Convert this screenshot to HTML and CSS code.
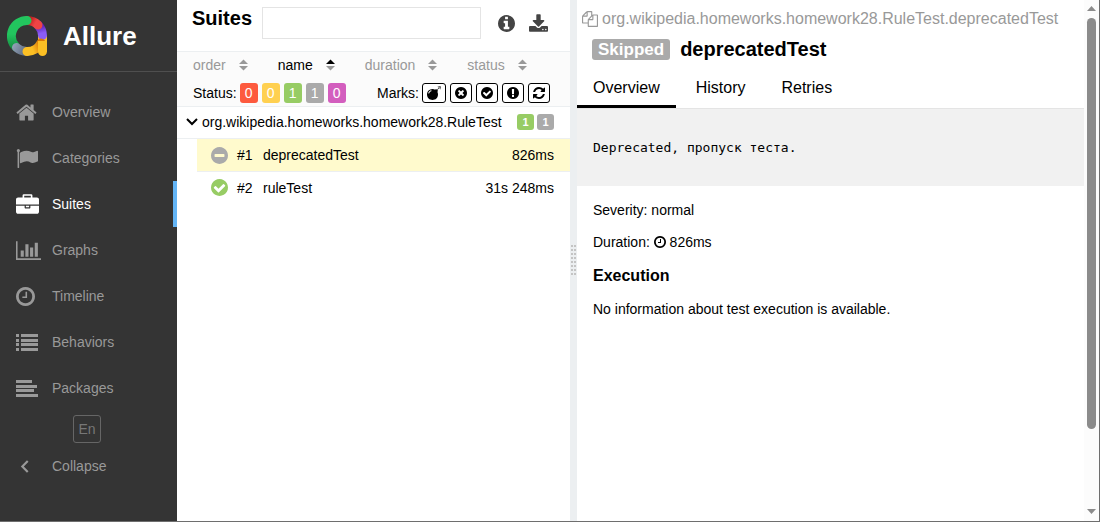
FILE: index.html
```html
<!DOCTYPE html>
<html lang="en">
<head>
<meta charset="utf-8">
<title>Allure Report</title>
<link rel="stylesheet" href="styles.css">
</head>
<body>
<svg class="defs" aria-hidden="true">
  <symbol id="sorter" viewBox="0 0 10 12"><path class="up" d="M5 0L10 5H0z"/><path class="down" d="M0 7H10L5 12z"/></symbol>
  <symbol id="clock" viewBox="128 128 1536 1536"><path d="M1024 544v448q0 14-9 23t-23 9h-320q-14 0-23-9t-9-23v-64q0-14 9-23t23-9h224v-352q0-14 9-23t23-9h64q14 0 23 9t9 23zm416 352q0-148-73-273t-198-198-273-73-273 73-198 198-73 273 73 273 198 198 273 73 273-73 198-198 73-273zm224 0q0 209-103 385.5t-279.5 279.5-385.5 103-385.5-103-279.5-279.5-103-385.5 103-385.5 279.5-279.5 385.5-103 385.5 103 279.5 279.5 103 385.5z"/></symbol>
  <symbol id="check" viewBox="128 128 1536 1536"><path d="M1412 734q0-28-18-46l-91-90q-19-19-45-19t-45 19l-408 407-226-226q-19-19-45-19t-45 19l-91 90q-18 18-18 46 0 27 18 45l362 362q19 19 45 19 27 0 46-19l543-543q18-18 18-45zm252 162q0 209-103 385.5t-279.5 279.5-385.5 103-385.5-103-279.5-279.5-103-385.5 103-385.5 279.5-279.5 385.5-103 385.5 103 279.5 279.5 103 385.5z"/></symbol>
</svg>
<div class="app">
  <nav class="side">
    <a class="brand" href="#">
      <svg class="logo" viewBox="0 0 40 40" fill="none" stroke-width="9" stroke-linecap="round">
        <defs>
          <linearGradient id="lg" gradientUnits="userSpaceOnUse" x1="0" y1="18" x2="0" y2="36"><stop offset="0" stop-color="#22c55e"/><stop offset="1" stop-color="#15803d"/></linearGradient>
          <linearGradient id="ls" gradientUnits="userSpaceOnUse" x1="5" y1="30" x2="20" y2="38"><stop offset="0" stop-color="#94a3b8"/><stop offset="1" stop-color="#58657a"/></linearGradient>
          <linearGradient id="ly" gradientUnits="userSpaceOnUse" x1="20" y1="36" x2="34" y2="30"><stop offset=".4" stop-color="#fbbf24"/><stop offset="1" stop-color="#d97706"/></linearGradient>
          <linearGradient id="lp" gradientUnits="userSpaceOnUse" x1="33" y1="10" x2="36" y2="22"><stop offset="0" stop-color="#5b21b6"/><stop offset=".6" stop-color="#8b5cf6"/></linearGradient>
          <linearGradient id="lr" gradientUnits="userSpaceOnUse" x1="22" y1="4" x2="32" y2="10"><stop offset="0" stop-color="#b91c1c"/><stop offset=".6" stop-color="#ef4444"/></linearGradient>
        </defs>
        <path stroke="#fbbf24" stroke-linecap="butt" d="M35.500 20V30"/>
        <path stroke="url(#lp)" d="M31 9A15.500 15.500 0 0 1 35.500 19.500"/>
        <path stroke="url(#lr)" d="M20 4.500A15.500 15.500 0 0 1 31 9"/>
        <path stroke="url(#lg)" d="M9 31A15.500 15.500 0 0 1 20 4.500"/>
        <path stroke="url(#ls)" d="M9.500 31.500A15.500 15.500 0 0 0 20 35.500"/>
        <path stroke="url(#ly)" d="M20 35.500A15.500 15.500 0 0 0 34 27"/>
        <path fill="#fbbf24" d="M31 25H40V35.500A4.500 4.500 0 0 1 31 35.500z"/>
      </svg>
      <span class="brand-name">Allure</span>
    </a>
    <ul class="menu">
      <li><a href="#"><svg class="w20" viewBox="64 128 1664 1536"><path d="M1472 992v480q0 26-19 45t-45 19h-384v-384h-256v384h-384q-26 0-45-19t-19-45v-480q0-1 .5-3t.5-3l575-474 575 474q1 2 1 6zm223-69l-62 74q-8 9-21 11h-3q-13 0-21-7l-692-577-692 577q-12 8-24 7-13-2-21-11l-62-74q-8-10-7-23.500t11-21.500l719-599q32-26 76-26t76 26l244 204v-195q0-14 9-23t23-9h192q14 0 23 9t9 23v408l219 182q10 8 11 21.500t-7 23.500z"/></svg><span>Overview</span></a></li>
      <li><a href="#"><svg class="w22" viewBox="0 128 1792 1536"><path d="M320 256q0 72-64 110v1266q0 13-9.500 22.500t-22.500 9.500h-64q-13 0-22.500-9.500t-9.500-22.500v-1266q-64-38-64-110 0-53 37.500-90.500t90.500-37.500 90.500 37.500 37.500 90.500zm1472 64v763q0 25-12.500 38.500t-39.500 27.500q-215 116-369 116-61 0-123.500-22t-108.500-48-115.500-48-142.500-22q-192 0-464 146-17 9-33 9-26 0-45-19t-19-45v-742q0-32 31-55 21-14 79-43 236-120 421-120 107 0 200 29t219 88q38 19 88 19 54 0 117.500-21t110-47 88-47 54.500-21q26 0 45 19t19 45z"/></svg><span>Categories</span></a></li>
      <li><a class="current" href="#"><svg class="w23" viewBox="0 0 1792 1536"><path d="M640 256h512v-128h-512v128zm1152 640v480q0 66-47 113t-113 47h-1472q-66 0-113-47t-47-113v-480h672v160q0 26 19 45t45 19h320q26 0 45-19t19-45v-160h672zm-768 0v128h-256v-128h256zm768-480v384h-1792v-384q0-66 47-113t113-47h352v-160q0-40 28-68t68-28h576q40 0 68 28t28 68v160h352q66 0 113 47t47 113z"/></svg><span>Suites</span></a></li>
      <li><a href="#"><svg class="w25" viewBox="0 128 2048 1536"><path d="M640 896v512h-256v-512h256zm384-512v1024h-256v-1024h256zm1024 1152v128h-2048v-1536h128v1408h1920zm-640-896v768h-256v-768h256zm384-384v1152h-256v-1152h256z"/></svg><span>Graphs</span></a></li>
      <li><a href="#"><svg class="w19"><use href="#clock"/></svg><span>Timeline</span></a></li>
      <li><a href="#"><svg class="w22" viewBox="0 0 22 17"><path d="M0 0h3v3H0zM5 0h17v3H5zM0 5h3v3H0zM5 5h17v3H5zM0 9h3v3H0zM5 9h17v3H5zM0 14h3v3H0zM5 14h17v3H5z"/></svg><span>Behaviors</span></a></li>
      <li><a href="#"><svg class="w22" viewBox="0 0 22 17"><path d="M0 0h16v3H0zM0 5h21v3H0zM0 9h18v3H0zM0 14h22v3H0z"/></svg><span>Packages</span></a></li>
    </ul>
    <button class="lang" type="button">En</button>
    <button class="collapse" type="button"><svg viewBox="0 0 8 12"><path d="M7 1L2 6l5 5" fill="none" stroke="currentColor" stroke-width="2"/></svg><span>Collapse</span></button>
  </nav>

  <main class="suites">
    <header class="suites-head">
      <h1>Suites</h1>
      <input type="text" aria-label="Search">
      <button class="tool" type="button" aria-label="Info"><svg class="info" viewBox="128 128 1536 1536"><path d="M1152 1376v-160q0-14-9-23t-23-9h-96v-512q0-14-9-23t-23-9h-320q-14 0-23 9t-9 23v160q0 14 9 23t23 9h96v320h-96q-14 0-23 9t-9 23v160q0 14 9 23t23 9h448q14 0 23-9t9-23zm-128-896v-160q0-14-9-23t-23-9h-192q-14 0-23 9t-9 23v160q0 14 9 23t23 9h192q14 0 23-9t9-23zm640 416q0 209-103 385.500t-279.500 279.500-385.500 103-385.500-103-279.500-279.500-103-385.500 103-385.500 279.500-279.500 385.500-103 385.500 103 279.500 279.500 103 385.500z"/></svg></button>
      <button class="tool" type="button" aria-label="Download"><svg class="download" viewBox="64 0 1664 1536"><path d="M1344 1344q0-26-19-45t-45-19-45 19-19 45 19 45 45 19 45-19 19-45zm256 0q0-26-19-45t-45-19-45 19-19 45 19 45 45 19 45-19 19-45zm128-224v320q0 40-28 68t-68 28h-1472q-40 0-68-28t-28-68v-320q0-40 28-68t68-28h465l135 136q58 56 136 56t136-56l136-136h464q40 0 68 28t28 68zm-325-569q17 41-14 70l-448 448q-18 19-45 19t-45-19l-448-448q-31-29-14-70 17-39 59-39h256v-448q0-26 19-45t45-19h256q26 0 45 19t19 45v448h256q42 0 59 39z"/></svg></button>
    </header>
    <section class="controls">
      <div class="sorters">
        <button type="button">order<svg><use href="#sorter"/></svg></button>
        <button type="button" class="active">name<svg viewBox="0 0 10 12"><path d="M5 0L10 5H0z"/><path fill="#999" d="M0 7H10L5 12z"/></svg></button>
        <button type="button">duration<svg><use href="#sorter"/></svg></button>
        <button type="button">status<svg><use href="#sorter"/></svg></button>
      </div>
      <div class="filters">
        <div class="group"><span class="label">Status:</span>
          <button type="button" class="count failed">0</button>
          <button type="button" class="count broken">0</button>
          <button type="button" class="count passed">1</button>
          <button type="button" class="count skipped">1</button>
          <button type="button" class="count unknown">0</button>
        </div>
        <div class="group"><span class="label marks">Marks:</span>
          <button type="button" class="mark wide" aria-label="Flaky"><svg viewBox="0 0 1792 1792"><path d="M571 589q-10-25-34-35t-49 0q-108 44-191 127t-127 191q-10 25 0 49t35 34q13 5 24 5 42 0 60-40 34-84 98.500-148.500t148.500-98.500q25-11 35-35t0-49zm942-356l46 46-244 243 68 68q19 19 19 45.500t-19 45.500l-64 64q89 161 89 343 0 143-55.500 273.500t-150 225-225 150-273.500 55.500-273.500-55.500-225-150-150-225-55.500-273.500 55.500-273.500 150-225 225-150 273.500-55.500q182 0 343 89l64-64q19-19 45.500-19t45.500 19l68 68zm8-56q-10 10-22 10-13 0-23-10l-91-90q-9-10-9-23t9-23q10-9 23-9t23 9l90 91q10 9 10 22.500t-10 22.500zm230 230q-11 9-23 9t-23-9l-90-91q-10-9-10-22.500t10-22.500q9-10 22.500-10t22.500 10l91 90q9 10 9 23t-9 23zm41-183q0 14-9 23t-23 9h-96q-14 0-23-9t-9-23 9-23 23-9h96q14 0 23 9t9 23zm-192-192v96q0 14-9 23t-23 9-23-9-9-23v-96q0-14 9-23t23-9 23 9 9 23zm151 55l-91 90q-10 10-22 10-13 0-23-10-10-9-10-22.500t10-22.500l90-91q10-9 23-9t23 9q9 10 9 23t-9 23z"/></svg></button>
          <button type="button" class="mark" aria-label="New failed"><svg viewBox="128 128 1536 1536"><path d="M1277 1122q0-26-19-45l-181-181 181-181q19-19 19-45 0-27-19-46l-90-90q-19-19-46-19-26 0-45 19l-181 181-181-181q-19-19-45-19-27 0-46 19l-90 90q-19 19-19 46 0 26 19 45l181 181-181 181q-19 19-19 45 0 27 19 46l90 90q19 19 46 19 26 0 45-19l181-181 181 181q19 19 45 19 27 0 46-19l90-90q19-19 19-46zm387-226q0 209-103 385.500t-279.500 279.500-385.500 103-385.500-103-279.500-279.500-103-385.500 103-385.500 279.500-279.500 385.500-103 385.500 103 279.500 279.500 103 385.500z"/></svg></button>
          <button type="button" class="mark" aria-label="New passed"><svg><use href="#check"/></svg></button>
          <button type="button" class="mark" aria-label="New broken"><svg viewBox="128 128 1536 1536"><path d="M896 128q209 0 385.500 103t279.500 279.500 103 385.500-103 385.500-279.500 279.500-385.500 103-385.500-103-279.500-279.500-103-385.500 103-385.500 279.500-279.500 385.500-103zm128 1247v-190q0-14-9-23.500t-22-9.500h-192q-13 0-23 10t-10 23v190q0 13 10 23t23 10h192q13 0 22-9.500t9-23.500zm-2-344l18-621q0-12-10-18-10-8-24-8h-220q-14 0-24 8-10 6-10 18l17 621q0 10 10 17.500t24 7.500h185q14 0 23.500-7.500t10.500-17.500z"/></svg></button>
          <button type="button" class="mark" aria-label="Retries"><svg viewBox="128 128 1536 1536"><path d="M1639 1056q0 5-1 7-64 268-268 434.500t-478 166.500q-146 0-282.500-55t-243.500-157l-129 129q-19 19-45 19t-45-19-19-45v-448q0-26 19-45t45-19h448q26 0 45 19t19 45-19 45l-137 137q71 66 161 102t187 36q134 0 250-65t186-179q11-17 53-117 8-23 30-23h192q13 0 22.500 9.500t9.500 22.500zm25-800v448q0 26-19 45t-45 19h-448q-26 0-45-19t-19-45 19-45l138-138q-148-137-349-137-134 0-250 65t-186 179q-11 17-53 117-8 23-30 23h-199q-13 0-22.500-9.500t-9.500-22.500v-7q65-268 270-434.500t480-166.500q146 0 284 55.500t245 156.500l130-129q19-19 45-19t45 19 19 45z"/></svg></button>
        </div>
      </div>
    </section>
    <section class="tree">
      <div class="node">
        <svg class="arrow" viewBox="0 0 12 8"><path d="M1 1l5 5 5-5" fill="none" stroke="currentColor" stroke-width="2"/></svg>
        <span class="grow">org.wikipedia.homeworks.homework28.RuleTest</span>
        <span class="pill passed">1</span><span class="pill skipped">1</span>
      </div>
      <a class="leaf selected" href="#">
        <svg class="state grey" viewBox="128 128 1536 1536"><path d="M1344 960v-128q0-26-19-45t-45-19h-768q-26 0-45 19t-19 45v128q0 26 19 45t45 19h768q26 0 45-19t19-45zm320-64q0 209-103 385.500t-279.500 279.500-385.500 103-385.500-103-279.500-279.500-103-385.500 103-385.500 279.500-279.500 385.500-103 385.500 103 279.500 279.500 103 385.500z"/></svg>
        <span class="num">#1</span><span class="grow">deprecatedTest</span><span>826ms</span>
      </a>
      <a class="leaf" href="#">
        <svg class="state green"><use href="#check"/></svg>
        <span class="num">#2</span><span class="grow">ruleTest</span><span>31s 248ms</span>
      </a>
    </section>
  </main>

  <div class="gutter"><svg viewBox="0 0 5 31"><path d="M1 0V31M4 0V31" stroke="#c4c4c4" stroke-width="2" stroke-dasharray="2 2"/></svg></div>

  <article class="detail">
    <div class="fullname">
      <svg viewBox="0 0 1792 1792"><path d="M1696 384q40 0 68 28t28 68v1216q0 40-28 68t-68 28h-960q-40 0-68-28t-28-68v-288h-544q-40 0-68-28t-28-68v-672q0-40 20-88t48-76l408-408q28-28 76-48t88-20h416q40 0 68 28t28 68v328q68-40 128-40h416zm-544 213l-299 299h299v-299zm-640-384l-299 299h299v-299zm196 647l316-316v-416h-384v416q0 40-28 68t-68 28h-416v640h512v-256q0-40 20-88t48-76zm956 804v-1152h-384v416q0 40-28 68t-68 28h-416v640h896z"/></svg>
      <span>org.wikipedia.homeworks.homework28.RuleTest.deprecatedTest</span>
    </div>
    <h2 class="title"><span class="status">Skipped</span>deprecatedTest</h2>
    <nav class="tabs"><a class="tab on" href="#">Overview</a><a class="tab" href="#">History</a><a class="tab" href="#">Retries</a></nav>
    <pre class="message">Deprecated, пропуск теста.</pre>
    <div class="info-block">
      <p>Severity: normal</p>
      <p>Duration: <svg class="dur"><use href="#clock"/></svg> 826ms</p>
      <h3>Execution</h3>
      <p>No information about test execution is available.</p>
    </div>
  </article>
  <div class="scrollbar" aria-hidden="true">
    <svg viewBox="0 0 9 5"><path d="M0 5L4.500 0 9 5z"/></svg>
    <div class="track"><div class="thumb"></div></div>
    <svg viewBox="0 0 9 5"><path d="M0 0H9L4.500 5z"/></svg>
  </div>
</div>
</body>
</html>
```

FILE: styles.css
```css
* { box-sizing: border-box; }
body { margin: 0; font: 14px/20px "Liberation Sans", Arial, sans-serif; color: #000; background: #fff; }
button { font: inherit; color: inherit; background: none; border: 0; padding: 0; margin: 0; cursor: pointer; }
a { color: inherit; text-decoration: none; }
svg { display: block; flex: none; fill: currentColor; }
h1, h2, h3, p, pre, ul { margin: 0; padding: 0; }
.defs { position: absolute; width: 0; height: 0; }

.app { display: flex; min-height: 100vh; border-right: 1px solid #6e6e6e; border-bottom: 1px solid #6e6e6e; }

.side { width: 177px; flex: none; display: flex; flex-direction: column; background: #343434; color: #999; }
.brand { display: flex; align-items: center; gap: 16px; height: 72px; padding-left: 7px; border-bottom: 1px solid #4f4f4f; color: #fff; }
.logo { width: 40px; height: 40px; fill: none; }
.brand-name { font-size: 26px; line-height: 32px; font-weight: bold; }
.menu { list-style: none; padding-top: 17px; }
.menu a { display: grid; grid-template-columns: 36px 1fr; align-items: center; height: 46px; padding-left: 16px; border-right: 4px solid transparent; }
.menu .current { color: #fff; border-color: #64b5f6; }
.w19 { width: 19px; height: 19px; }
.w20 { width: 21px; height: 19px; }
.w22 { width: 22px; height: 19px; }
.w23 { width: 23px; height: 20px; }
.w25 { width: 25px; height: 19px; }
.lang { align-self: center; width: 28px; height: 28px; margin: 4px 3px 4px 0; border: 1px solid #666; border-radius: 3px; color: #777; }
.collapse { display: grid; grid-template-columns: 32px 1fr; align-items: center; height: 38px; padding-left: 20px; text-align: left; }
.collapse svg { width: 9px; height: 13px; }

.suites { flex: 393 1 0; min-width: 0; }
.suites-head { display: flex; align-items: center; height: 51px; padding: 0 22px 0 15px; }
.suites-head h1 { font-size: 20px; line-height: 24px; margin: 0 10px 16px 0; }
.suites-head input { flex: 1; min-width: 0; height: 32px; margin: 0 17px 5px 0; border: 1px solid #e4e4e4; padding: 0 8px; font: inherit; outline: 0; }
.tool { color: #444; margin-bottom: 5px; }
.tool + .tool { margin-left: 14px; }
.info { width: 17px; height: 17px; }
.download { width: 19px; height: 18px; }
.controls { background: #fbfbfb; border: solid #eceff1; border-width: 1px 0; padding: 3px 20px 3px 16px; }
.sorters { display: flex; gap: 30px; height: 20px; color: #999; }
.sorters button { display: flex; align-items: center; gap: 13px; }
.sorters svg { width: 9px; height: 12px; }
.sorters .active { color: #000; }
.filters { display: flex; justify-content: space-between; margin-top: 8px; }
.group { display: flex; gap: 4px; }
.label { margin-right: -1px; }
.count { width: 18px; height: 20px; border-radius: 3px; color: #fff; }
.failed { background: #fd5a3e; }
.broken { background: #ffd050; }
.passed { background: #97cc64; }
.skipped { background: #aaa; }
.unknown { background: #d35ebe; }
.mark { display: flex; align-items: center; justify-content: center; width: 22px; height: 20px; border: 1px solid #000; border-radius: 3px; background: #fff; }
.mark svg { width: 12px; height: 12px; }
.wide { width: 24px; }
.wide svg { width: 14px; height: 14px; }

.node { display: flex; align-items: center; gap: 3px; height: 32px; padding: 0 16px 1px 9px; border-bottom: 1px solid #eceff1; }
.arrow { width: 12px; height: 8px; margin-right: 1px; }
.grow { flex: 1; min-width: 0; }
.pill { width: 17px; height: 16px; border-radius: 3px; color: #fff; font-size: 11px; line-height: 16px; font-weight: bold; text-align: center; }
.leaf { display: flex; align-items: center; height: 31px; margin-left: 20px; padding: 0 16px 0 14px; }
.selected { height: 33px; background: #fffacd; border-bottom: 1px solid #eceff1; }
.state { width: 17px; height: 17px; }
.grey { color: #aaa; }
.green { color: #97cc64; }
.num { width: 26px; margin-left: 9px; }

.gutter { width: 7px; flex: none; display: flex; align-items: center; justify-content: center; background: #eceff1; }
.gutter svg { width: 5px; height: 31px; }

.detail { flex: 507 1 0; min-width: 0; }
.fullname { display: flex; align-items: center; gap: 4px; padding: 9px 5px 0; color: #999; font-size: 16px; }
.fullname svg { width: 16px; height: 16px; }
.title { display: flex; align-items: center; gap: 10px; padding: 8px 15px 0; font-size: 20px; line-height: 24px; }
.status { padding: 0 6px; border-radius: 3px; background: #aaa; color: #fff; font-size: 17px; line-height: 21px; }
.tabs { display: flex; gap: 4px; margin-top: 6px; border-bottom: 1px solid #e4e4e4; font-size: 16px; }
.tab { padding: 11px 16px 7px; border-bottom: 3px solid transparent; }
.on { border-color: #000; }
.message { padding: 29px 16px 28px; background: #f1f1f1; font: 13px/20px "DejaVu Sans Mono", "Liberation Mono", monospace; }
.info-block { padding: 14px 16px; }
.info-block p { margin-bottom: 12px; }
.info-block h3 { font-size: 16px; line-height: 24px; margin-bottom: 11px; }
.dur { display: inline-block; width: 12px; height: 12px; vertical-align: -1px; }

.scrollbar { width: 15px; flex: none; display: flex; flex-direction: column; align-items: center; padding: 6px 0 7px; background: #fcfcfc; color: #8b8b8b; }
.scrollbar svg { width: 9px; height: 5px; }
.track { flex: 1; padding: 7px 0; }
.thumb { width: 9px; height: 85%; border-radius: 5px; background: #8b8b8b; }
```
